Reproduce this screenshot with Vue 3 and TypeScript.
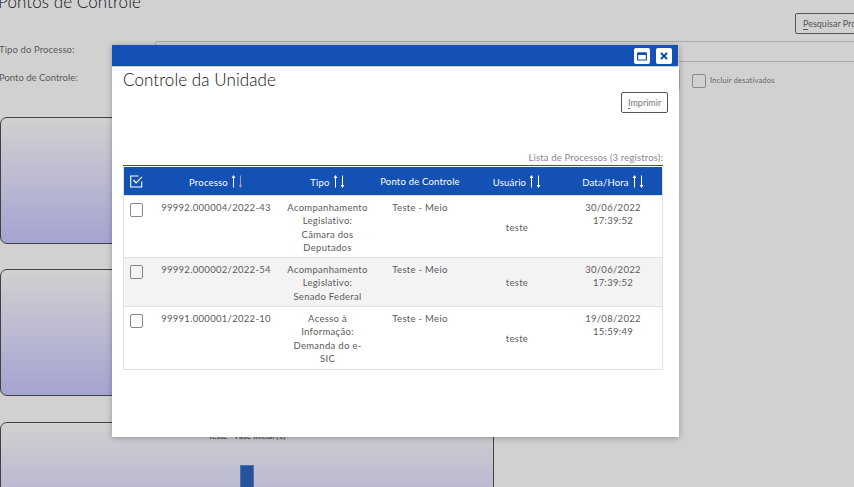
<script setup lang="ts">
interface ProcessRow {
  id: string
  type: string[]
  checkpoint: string
  user: string
  date: string
  time: string
  size: string
}

const rows: ProcessRow[] = [
  { id: '99992.000004/2022-43', type: ['Acompanhamento', 'Legislativo:', 'Câmara dos', 'Deputados'], checkpoint: 'Teste - Meio', user: 'teste', date: '30/06/2022', time: '17:39:52', size: 'first' },
  { id: '99992.000002/2022-54', type: ['Acompanhamento', 'Legislativo:', 'Senado Federal'], checkpoint: 'Teste - Meio', user: 'teste', date: '30/06/2022', time: '17:39:52', size: 'short' },
  { id: '99991.000001/2022-10', type: ['Acesso à', 'Informação:', 'Demanda do e-', 'SIC'], checkpoint: 'Teste - Meio', user: 'teste', date: '19/08/2022', time: '15:59:49', size: 'last' },
]

const headers = [
  { label: 'Processo', sort: true, active: true },
  { label: 'Tipo', sort: true, active: false },
  { label: 'Ponto de Controle', sort: false, active: false },
  { label: 'Usuário', sort: true, active: false },
  { label: 'Data/Hora', sort: true, active: false },
]
</script>

<template>
  <div class="screen">
    <div class="page">
      <h1 class="page-title"><span>Pontos de Controle</span></h1>
      <div class="commands"><button class="btn search"><span><u>P</u>esquisar Processos</span></button></div>
      <div class="field">
        <label>Tipo do Processo:</label>
        <div class="input wide"></div>
      </div>
      <div class="field second">
        <label class="l2">Ponto de Controle:</label>
        <div class="input select"></div>
        <i class="box"></i>
        <span class="inactive">Incluir desativados</span>
      </div>
      <div class="card"></div>
      <div class="card"></div>
      <div class="card chart">
        <span class="chart-title">Teste - Fase Inicial (1)</span>
        <div class="bar"></div>
      </div>
    </div>

    <div class="modal">
      <header class="modal-bar">
        <button class="win">
          <svg width="10" height="9" viewBox="0 0 10 9"><rect x=".6" y=".9" width="8.8" height="7.1" rx=".6" fill="none" stroke="#1351b4" stroke-width="1.2" /><path d="M.5 2h9" stroke="#1351b4" stroke-width="2" /></svg>
        </button>
        <button class="win">
          <svg width="8" height="8" viewBox="0 0 8 8"><path d="M1 1l6 6M7 1L1 7" stroke="#1351b4" stroke-width="2.1" /></svg>
        </button>
      </header>
      <div class="modal-body">
        <h2><span>Controle da Unidade</span></h2>
        <div class="print-row"><button class="btn print"><span><u>I</u>mprimir</span></button></div>
        <div class="caption"><span>Lista de Processos (3 registros):</span></div>
        <div class="table">
          <div class="row head">
            <div class="cell check">
              <svg width="13" height="13" viewBox="0 0 13 13" fill="none" stroke="#fff"><path d="M8.5 1H.7v11h11V6.5" stroke-width="1.1" /><path d="M3.3 5l2.8 3L12 1.8" stroke-width="1.2" /></svg>
            </div>
            <div v-for="h in headers" :key="h.label" class="cell" :class="{ plain: !h.sort }">
              <span>{{ h.label }}</span>
              <svg v-if="h.sort" class="sort" width="12" height="13" viewBox="0 0 12 13">
                <path d="M2 12.5V3H.6L2.5 0l1.9 3H3v9.5z" fill="#fff" />
                <path d="M9 .5V10H7.6l1.9 3 1.9-3H10V.5z" :fill="h.active ? '#9c9da5' : '#fff'" />
              </svg>
            </div>
          </div>
          <div v-for="r in rows" :key="r.id" class="row" :class="r.size">
            <div class="cell check"><i class="box"></i></div>
            <div class="cell">{{ r.id }}</div>
            <div class="cell"><div v-for="t in r.type" :key="t">{{ t }}</div></div>
            <div class="cell">{{ r.checkpoint }}</div>
            <div class="cell user">{{ r.user }}</div>
            <div class="cell"><div>{{ r.date }}</div><div>{{ r.time }}</div></div>
          </div>
        </div>
      </div>
    </div>
  </div>
</template>

<style>
body { margin: 0; overflow: hidden; }
</style>

<style scoped>
* { box-sizing: border-box; }
.screen { position: relative; width: 854px; height: 487px; overflow: hidden; background: #d1d1d1; font-family: Lato, "Liberation Sans", sans-serif; font-size: 9.5px; color: #5a5a5a; white-space: nowrap; }
.page { height: 487px; overflow: hidden; }
h1, h2 { margin: 0; font-weight: 300; font-size: 17px; line-height: 20px; color: #111; letter-spacing: .08px; }
.page-title { display: flex; height: 13px; margin-left: -2px; }
.page-title span { display: block; margin-top: -8px; }
.commands { height: 28px; padding-left: 795px; }
.btn { display: flex; align-items: center; height: 21px; padding: 0 7px; border: 1px solid #555; border-radius: 2px; background: transparent; font: 9px Lato, sans-serif; color: #555; white-space: nowrap; }
.btn u { text-underline-offset: 2px; }
.search { width: 110px; }
.field { display: flex; height: 28px; }
.field label { flex: none; width: 156px; padding-top: 2px; margin-left: -1px; line-height: 13px; letter-spacing: .1px; }
.field .l2 { letter-spacing: 0; }
.input { flex: none; height: 21px; border: 1px solid #a9a9a9; border-radius: 2px; }
.wide { width: 720px; }
.select { width: 525px; }
.box { display: block; width: 14px; height: 14px; border: 1px solid #888; border-radius: 2px; }
.second .box { flex: none; margin: 5px 0 0 12px; }
.inactive { margin: 5px 0 0 4px; line-height: 13px; font-size: 7.5px; letter-spacing: .2px; color: #666; }
.second { height: 48px; }
.card { width: 494px; height: 127px; margin-bottom: 25px; border: 1px solid #414141; border-radius: 7px; background: linear-gradient(#d1d1d1, #a5a3d1); }
.chart { display: flex; flex-direction: column; height: 128px; margin-top: 26px; padding-top: 7px; }
.chart-title { align-self: center; height: 12px; font-size: 8px; line-height: 12px; letter-spacing: .12px; color: #333; }
.bar { width: 14px; height: 80px; margin: 23px 0 0 239px; border: 1px solid #4871b0; background: #25549d; }

.modal { position: absolute; left: 112px; top: 45px; width: 567px; height: 392px; background: #fff; box-shadow: 0 1px 6px rgba(0, 0, 0, .3); }
.modal-bar { display: flex; justify-content: flex-end; gap: 6px; width: 566px; height: 21px; padding: 3px 6px 0 0; background: #1351b4; box-shadow: 0 1px 0 #ccc, 1px 0 0 #ccc; }
.win { display: grid; place-items: center; width: 16px; height: 16px; padding: 0; border: 0; border-radius: 2px; background: #fff; }
.modal-body { padding: 4px 16px 0 11px; }
h2 { height: 22px; }
.print-row { display: flex; justify-content: flex-end; height: 60px; margin-right: -5px; }
.print { width: 47px; padding: 0 6px; color: #777; }
.caption { display: flex; justify-content: flex-end; height: 14px; border-bottom: 1px solid #45601b; line-height: 12px; letter-spacing: .15px; color: #888; }
.table { width: 540px; margin-top: 1px; border: 1px solid #dee2e6; border-top: 0; letter-spacing: .3px; }
.row { display: grid; grid-template-columns: 23px 138px 85px 100px 94px 1fr; height: 62px; border-top: 1px solid #dee2e6; line-height: 13.4px; text-align: center; }
.row.head { height: 28px; border: 0; background: #1351b4; color: #fff; letter-spacing: .2px; }
.head .cell { display: flex; align-items: center; justify-content: center; gap: 3px; padding-top: 3px; }
.head .check { justify-content: flex-start; padding: 1px 0 0 6px; }
.head .plain { padding-top: 1px; }
.head .sort { margin-top: -2px; }
.cell { padding-top: 5px; }
.row:not(.head) .check { padding: 7px 0 0 6px; }
.row .box { width: 13px; }
.short { height: 49px; background: #f3f3f3; }
.last { height: 63px; }
.row .user { align-self: center; padding: 2px 0 0; }
</style>
